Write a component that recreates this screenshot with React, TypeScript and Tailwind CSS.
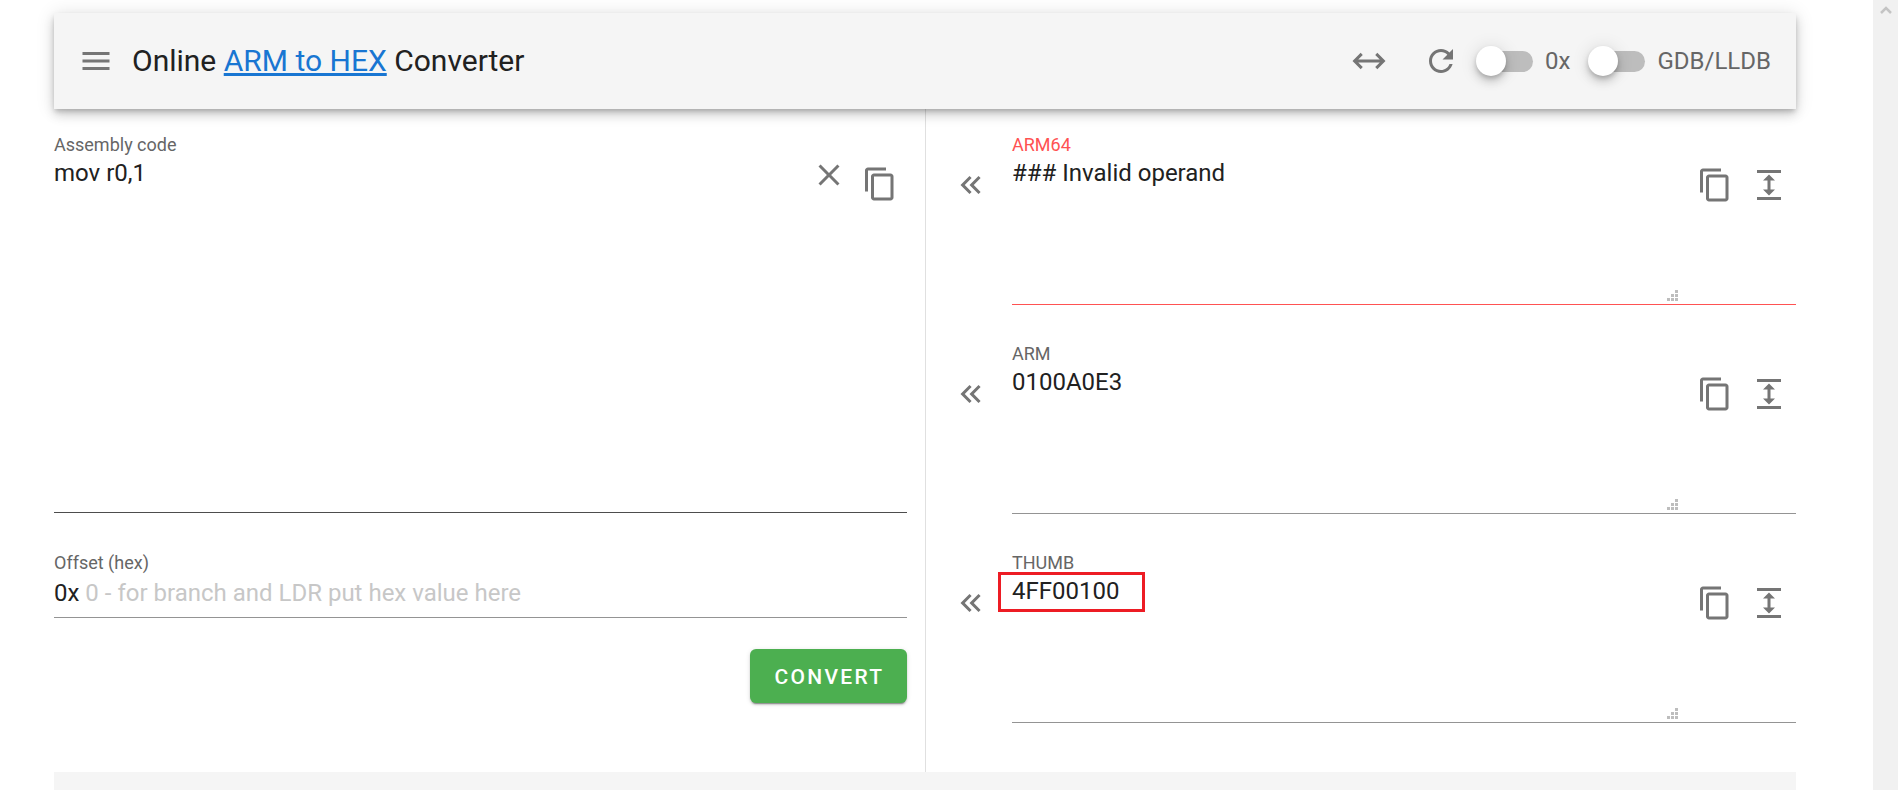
import React from 'react';

const Icon = ({ d, className = '' }: { d: string; className?: string }) => (
    <svg viewBox="0 0 24 24" className={`w-[36px] h-[36px] shrink-0 fill-[#757575] ${className}`}>
        <path d={d} />
    </svg>
);

const MENU = 'M3 18h18v-2H3v2zm0-5h18v-2H3v2zm0-7v2h18V6H3z';
const SWAP = 'M6.45,17.45L1,12L6.45,6.55L7.86,7.96L4.83,11H19.17L16.14,7.96L17.55,6.55L23,12L17.55,17.45L16.14,16.04L19.17,13H4.83L7.86,16.04L6.45,17.45Z';
const REFRESH = 'M17.65 6.35C16.2 4.9 14.21 4 12 4c-4.42 0-7.99 3.58-7.99 8s3.57 8 7.99 8c3.73 0 6.84-2.55 7.73-6h-2.08c-.82 2.33-3.04 4-5.65 4-3.31 0-6-2.69-6-6s2.69-6 6-6c1.66 0 3.14.69 4.22 1.78L13 11h7V4l-2.35 2.35z';
const CLOSE = 'M19 6.41L17.59 5 12 10.59 6.41 5 5 6.41 10.59 12 5 17.59 6.41 19 12 13.41 17.59 19 19 17.59 13.41 12z';
const COPY = 'M16 1H4c-1.1 0-2 .9-2 2v14h2V3h12V1zm3 4H8c-1.1 0-2 .9-2 2v14c0 1.1.9 2 2 2h11c1.1 0 2-.9 2-2V7c0-1.1-.9-2-2-2zm0 16H8V7h11v14z';
const EXPAND = 'M13,9V15H16L12,19L8,15H11V9H8L12,5L16,9H13M4,2H20V4H4V2M4,20H20V22H4V20Z';
const DOUBLE_LEFT = 'M18.41,7.41L17,6L11,12L17,18L18.41,16.59L13.83,12L18.41,7.41M12.41,7.41L11,6L5,12L11,18L12.41,16.59L7.83,12L12.41,7.41Z';

const Toggle = ({ label }: { label: string }) => (
    <div className="flex items-center">
        <div className="relative w-[57px] h-[30px] flex items-center justify-end">
            <div className="w-[51px] h-[21px] rounded-full bg-[#bdbdbd]" />
            <div className="absolute left-0 top-0 w-[30px] h-[30px] rounded-full bg-white shadow-[0_3px_5px_-1px_rgba(0,0,0,0.2),0_6px_10px_0_rgba(0,0,0,0.14),0_1px_18px_0_rgba(0,0,0,0.12)]" />
        </div>
        <span className="ml-[12px] text-[24px] leading-[28px] text-[#666666]">{label}</span>
    </div>
);

const ResizeHandle = () => (
    <svg width="11" height="11" viewBox="0 0 11 11" className="absolute right-[118px] bottom-[3px] fill-[#bdbdbd]">
        <rect x="8" y="0" width="3" height="3" />
        <rect x="4" y="4" width="3" height="3" />
        <rect x="8" y="4" width="3" height="3" />
        <rect x="0" y="8" width="3" height="3" />
        <rect x="4" y="8" width="3" height="3" />
        <rect x="8" y="8" width="3" height="3" />
    </svg>
);

const OutputPanel = ({ label, value, error }: { label: string; value: string; error?: boolean }) => (
    <div className="flex h-[209px] pt-[26px] pl-[27px]">
        <Icon d={DOUBLE_LEFT} className="mt-[32px]" />
        <div className={`relative flex-1 ml-[23px] h-[170px] border-b ${error ? 'border-[#ff5252]' : 'border-[#949494]'}`}>
            <div className={`text-[18px] leading-[20px] ${error ? 'text-[#ff5252]' : 'text-[#666666]'}`}>{label}</div>
            <div className="flex justify-between pr-[9px]">
                <div className="mt-[4px] text-[24px] leading-[28px] text-[#212121]">{value}</div>
                <div className="flex gap-[18px] mt-[12px]">
                    <Icon d={COPY} />
                    <Icon d={EXPAND} />
                </div>
            </div>
            <ResizeHandle />
        </div>
    </div>
);

export default function App() {
    return (
        <div className="flex h-[790px] overflow-hidden bg-white font-['Roboto',sans-serif]">
            <div className="flex flex-col flex-1 min-w-0 pl-[54px] pr-[77px] pt-[13px]">
                <header className="relative z-10 flex items-center h-[96px] shrink-0 pl-[24px] pr-[25px] bg-[#f5f5f5] shadow-[0_3px_5px_-1px_rgba(0,0,0,0.2),0_6px_10px_0_rgba(0,0,0,0.14),0_1px_18px_0_rgba(0,0,0,0.12)]">
                    <Icon d={MENU} />
                    <h1 className="ml-[18px] text-[30px] leading-[36px] font-normal text-[#212121]">
                        Online <a href="#" className="text-[#1976d2] underline">ARM to HEX</a> Converter
                    </h1>
                    <div className="flex items-center ml-auto">
                        <Icon d={SWAP} />
                        <Icon d={REFRESH} className="ml-[36px]" />
                        <div className="flex items-center gap-[18px] ml-[17px]">
                            <Toggle label="0x" />
                            <Toggle label="GDB/LLDB" />
                        </div>
                    </div>
                </header>

                <div className="flex h-[663px] shrink-0">
                    <div className="w-[872px] pt-[26px] pr-[18px] border-r border-[#e0e0e0]">
                        <div className="h-[378px] border-b border-[#4d4d4d]">
                            <div className="text-[18px] leading-[20px] text-[#666666]">Assembly code</div>
                            <div className="flex justify-between pr-[9px]">
                                <div className="mt-[4px] text-[24px] leading-[28px] text-[#212121]">mov r0,1</div>
                                <div className="flex gap-[15px] mt-[2px]">
                                    <Icon d={CLOSE} />
                                    <Icon d={COPY} className="mt-[9px]" />
                                </div>
                            </div>
                        </div>
                        <div className="mt-[40px] h-[65px] border-b border-[#949494]">
                            <div className="text-[18px] leading-[20px] text-[#666666]">Offset (hex)</div>
                            <div className="mt-[6px] text-[24px] leading-[28px] text-[#212121]">
                                0x <span className="text-[#c7c7c7]">0 - for branch and LDR put hex value here</span>
                            </div>
                        </div>
                        <div className="flex justify-end mt-[31px]">
                            <button className="w-[157px] h-[54px] pt-[3px] pl-[2px] rounded-[6px] bg-[#4caf50] text-white text-[21px] font-medium tracking-[0.11em] shadow-[0_3px_1px_-2px_rgba(0,0,0,0.3),0_2px_2px_0_rgba(0,0,0,0.14),0_1px_5px_0_rgba(0,0,0,0.12)]">
                                CONVERT
                            </button>
                        </div>
                    </div>

                    <div className="relative flex-1">
                        <OutputPanel label="ARM64" value="### Invalid operand" error />
                        <OutputPanel label="ARM" value="0100A0E3" />
                        <OutputPanel label="THUMB" value="4FF00100" />
                        {/* red annotation drawn over the screenshot */}
                        <div className="absolute left-[72px] top-[463px] w-[147px] h-[40px] border-[3px] border-[#ed1c24]" />
                    </div>
                </div>

                <div className="flex-1 bg-[#f5f5f5]" />
            </div>

            <div className="w-[25px] shrink-0 bg-[#f1f1f1] flex justify-center pt-[5px]">
                <svg width="12" height="10" viewBox="0 0 12 10" className="fill-none stroke-[#c4c4c4] stroke-[2.5]">
                    <path d="M1 8l5-5 5 5" />
                </svg>
            </div>
        </div>
    );
}
